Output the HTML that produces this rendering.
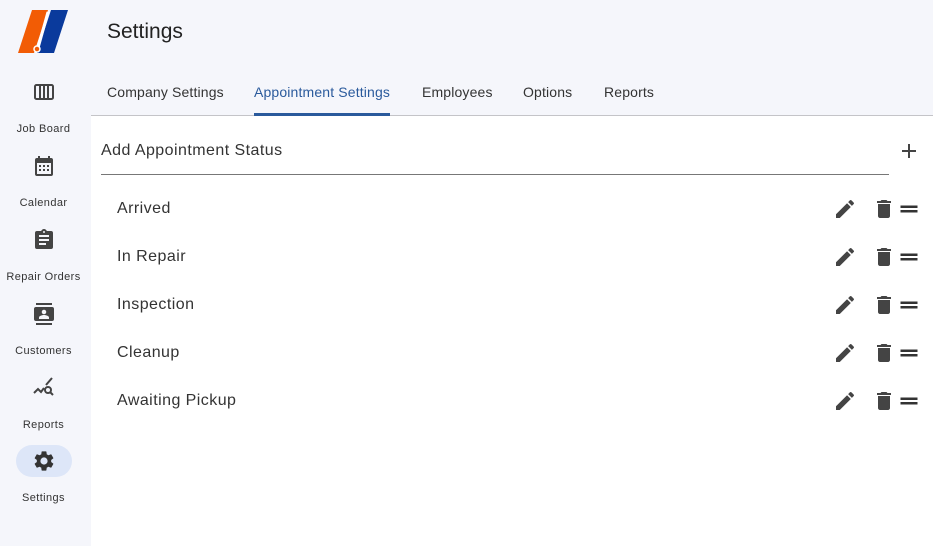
<!DOCTYPE html>
<html><head><style>
*{margin:0;padding:0;box-sizing:border-box}
body{width:933px;height:546px;overflow:hidden;background:#fff;font-family:"Liberation Sans",sans-serif;color:#333;position:relative}
.side{position:absolute;left:0;top:0;width:91px;height:546px;background:#f5f6fb}
.top{position:absolute;left:91px;top:0;right:0;height:116px;background:#f5f6fb;border-bottom:1px solid #c4c4c8}
.nav{position:absolute;left:0;width:87px;text-align:center;font-size:11px;color:#333;letter-spacing:.4px}
.nav svg{display:block;margin:0 auto}
.title{position:absolute;left:107px;top:20px;font-size:21px;color:#222}
.tab{position:absolute;top:84px;font-size:14px;color:#333;letter-spacing:.15px}
.ind{position:absolute;left:254px;top:113px;width:136px;height:3px;background:#2a5a9c}
.row{position:absolute;left:117px;font-size:16px;color:#333;letter-spacing:.45px}
.ic{position:absolute}
</style></head><body>
<div class="side">
<svg style="position:absolute;left:18px;top:10px" width="51" height="44" viewBox="0 0 51 44"><polygon points="14,0 30,0 16,43 0,43" fill="#f25c05"/><polygon points="33,0 50,0 36,43 19,43" fill="#0a3a9c"/><path d="M30 2 L20 38" stroke="#fff" stroke-width="3"/><circle cx="19" cy="39" r="3" fill="#f25c05" stroke="#fff" stroke-width="1.5"/></svg>
<div class="nav" style="top:80px"><svg width="24" height="24" viewBox="0 0 24 24"><rect x="3" y="5" width="18" height="14" rx="1.5" fill="none" stroke="#444" stroke-width="2"/><path d="M8 5v14M12 5v14M16 5v14" stroke="#444" stroke-width="2"/></svg><div style="margin-top:19px">Job Board</div></div>
<div class="nav" style="top:154px"><svg width="24" height="24" viewBox="0 0 24 24"><path fill="#444" d="M19 4h-1V2h-2v2H8V2H6v2H5a2 2 0 0 0-2 2v14a2 2 0 0 0 2 2h14a2 2 0 0 0 2-2V6a2 2 0 0 0-2-2zm0 16H5V9h14v11zM7 11h2v2H7zm4 0h2v2h-2zm4 0h2v2h-2zM7 15h2v2H7zm4 0h2v2h-2zm4 0h2v2h-2z"/></svg><div style="margin-top:19px">Calendar</div></div>
<div class="nav" style="top:228px"><svg width="24" height="24" viewBox="0 0 24 24"><path fill="#444" d="M19 3h-4.18C14.4 1.84 13.3 1 12 1s-2.4.84-2.82 2H5a2 2 0 0 0-2 2v14a2 2 0 0 0 2 2h14a2 2 0 0 0 2-2V5a2 2 0 0 0-2-2zm-7 0a1 1 0 1 1 0 2 1 1 0 0 1 0-2zm2 14H7v-2h7v2zm3-4H7v-2h10v2zm0-4H7V7h10v2z"/></svg><div style="margin-top:19px">Repair Orders</div></div>
<div class="nav" style="top:302px"><svg width="24" height="24" viewBox="0 0 24 24"><path fill="#444" d="M4 1h16v2H4zM4 21h16v2H4zM20 5H4a2 2 0 0 0-2 2v10a2 2 0 0 0 2 2h16a2 2 0 0 0 2-2V7a2 2 0 0 0-2-2zm-8 2.75a2.25 2.25 0 1 1 0 4.5 2.25 2.25 0 0 1 0-4.5zM17 17H7v-1.5c0-1.67 3.33-2.5 5-2.5s5 .83 5 2.5V17z"/></svg><div style="margin-top:19px">Customers</div></div>
<div class="nav" style="top:376px"><svg width="24" height="24" viewBox="0 0 24 24"><path fill="none" stroke="#444" stroke-width="2" d="M2 17l4-4 3 3 3-4M14 9l6-7"/><circle cx="16" cy="14" r="3" fill="none" stroke="#444" stroke-width="2"/><path d="M18 16l3 3" stroke="#444" stroke-width="2"/></svg><div style="margin-top:19px">Reports</div></div>
<div style="position:absolute;left:16px;top:445px;width:56px;height:32px;border-radius:16px;background:#dde6f8"></div>
<div class="nav" style="top:449px"><svg width="24" height="24" viewBox="0 0 24 24"><path fill="#333" d="M19.14 12.94c.04-.3.06-.61.06-.94 0-.32-.02-.64-.07-.94l2.03-1.58a.49.49 0 0 0 .12-.61l-1.92-3.32a.49.49 0 0 0-.59-.22l-2.39.96c-.5-.38-1.030-.7-1.62-.94l-.36-2.54a.48.48 0 0 0-.48-.41h-3.84a.48.48 0 0 0-.47.41l-.36 2.54c-.59.24-1.13.57-1.62.94l-2.39-.96a.48.48 0 0 0-.59.22L2.74 8.87a.47.47 0 0 0 .12.61l2.03 1.58c-.05.3-.09.63-.09.94s.02.64.07.94l-2.03 1.58a.49.49 0 0 0-.12.61l1.92 3.32c.12.22.37.29.59.22l2.39-.96c.5.38 1.03.7 1.62.94l.36 2.54c.05.24.24.41.48.41h3.84c.24 0 .44-.17.47-.41l.36-2.54c.59-.24 1.13-.56 1.62-.94l2.39.96c.22.08.47 0 .59-.22l1.92-3.32a.46.46 0 0 0-.12-.61l-2.01-1.58zM12 15.6A3.6 3.6 0 1 1 12 8.4a3.6 3.6 0 0 1 0 7.2z"/></svg><div style="margin-top:19px">Settings</div></div>
</div>
<div class="top"></div>
<div class="title">Settings</div>
<div class="tab" style="left:107px">Company Settings</div>
<div class="tab" style="left:254px;color:#2a5a9c">Appointment Settings</div>
<div class="tab" style="left:422px">Employees</div>
<div class="tab" style="left:523px">Options</div>
<div class="tab" style="left:604px">Reports</div>
<div class="ind"></div>
<div style="position:absolute;left:101px;top:142px;font-size:16px;color:#333;letter-spacing:.45px">Add Appointment Status</div>
<div style="position:absolute;left:101px;top:174px;width:788px;height:1px;background:#777"></div>
<svg class="ic" style="left:897px;top:139px" width="24" height="24" viewBox="0 0 24 24"><path d="M12 5v14M5 12h14" stroke="#444" stroke-width="2"/></svg>
<div class="row" style="top:200px">Arrived</div>
<div class="row" style="top:248px">In Repair</div>
<div class="row" style="top:296px">Inspection</div>
<div class="row" style="top:344px">Cleanup</div>
<div class="row" style="top:392px">Awaiting Pickup</div>
<div id="icons"></div>
<script>
var h='';[197,245,293,341,389].forEach(function(t){
h+='<svg class="ic" style="left:833px;top:'+t+'px" width="24" height="24" viewBox="0 0 24 24"><path fill="#444" d="M3 17.25V21h3.75L17.81 9.94l-3.75-3.75L3 17.25zM20.71 7.04a1 1 0 0 0 0-1.41l-2.34-2.34a1 1 0 0 0-1.41 0l-1.83 1.83 3.75 3.75 1.83-1.83z"/></svg>';
h+='<svg class="ic" style="left:872px;top:'+t+'px" width="24" height="24" viewBox="0 0 24 24"><path fill="#444" d="M6 19c0 1.1.9 2 2 2h8c1.1 0 2-.9 2-2V7H6v12zM19 4h-3.5l-1-1h-5l-1 1H5v2h14V4z"/></svg>';
h+='<svg class="ic" style="left:897px;top:'+t+'px" width="24" height="24" viewBox="0 0 24 24"><path fill="#333" d="M3.5 8.5h17v2.5h-17zM3.5 13h17v2.5h-17z"/></svg>';
});document.getElementById('icons').innerHTML=h;
</script>
</body></html>
